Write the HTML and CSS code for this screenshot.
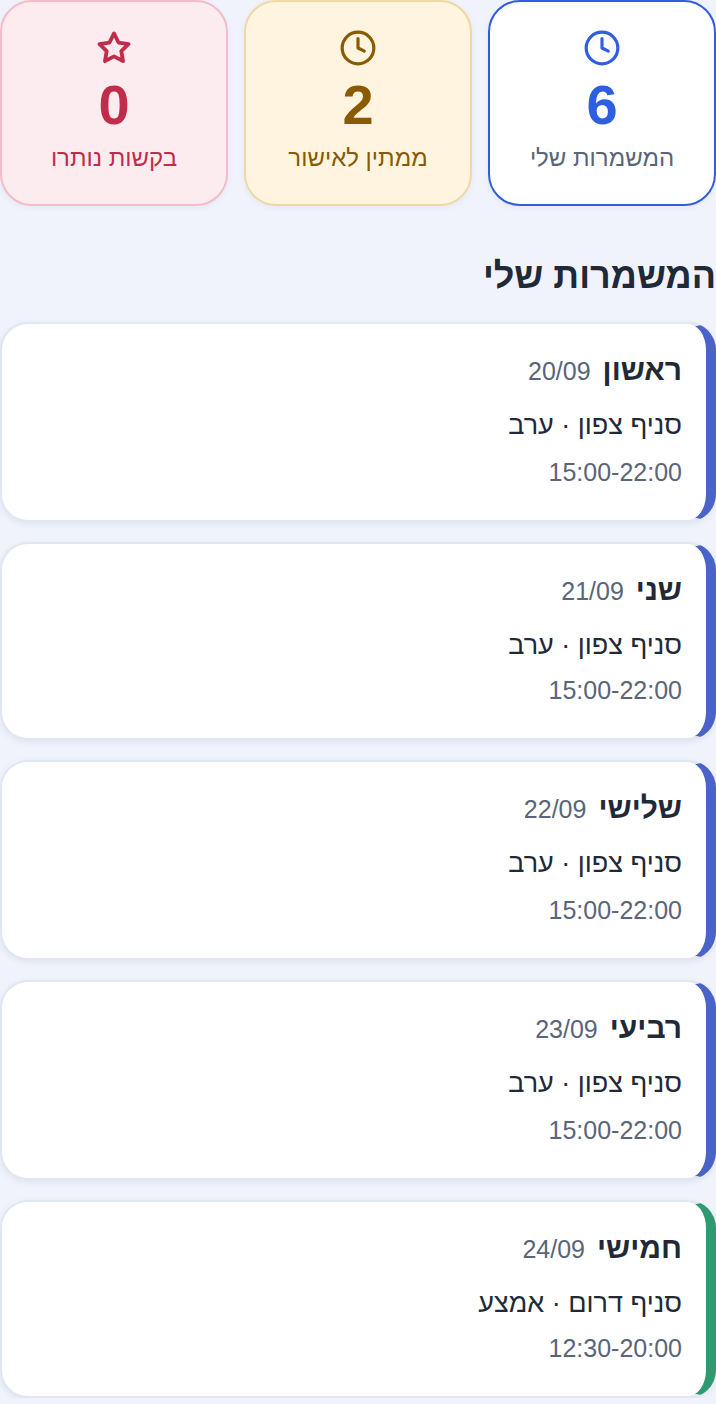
FILE: index.html
```html
<!DOCTYPE html>
<html lang="he" dir="rtl">
  <head>
    <meta charset="UTF-8" />
    <meta name="viewport" content="width=device-width, initial-scale=1.0" />
    <title>המשמרות שלי</title>
    <link rel="stylesheet" href="styles.css">
  </head>
  <body>
    <main>
      <section class="stats">
        <div class="stat stat-mine">
          <svg class="stat-icon" viewBox="0 0 24 24" aria-hidden="true">
            <circle cx="12" cy="12" r="10" />
            <path d="M12 6v6l4 2" />
          </svg>
          <div class="stat-num">6</div>
          <div class="stat-label">המשמרות שלי</div>
        </div>
        <div class="stat stat-pending">
          <svg class="stat-icon" viewBox="0 0 24 24" aria-hidden="true">
            <circle cx="12" cy="12" r="10" />
            <path d="M12 6v6l4 2" />
          </svg>
          <div class="stat-num">2</div>
          <div class="stat-label">ממתין לאישור</div>
        </div>
        <div class="stat stat-given">
          <svg class="stat-icon star-icon" viewBox="-1 -1 26 26" aria-hidden="true">
            <path d="M12 2l3.09 6.26L22 9.27l-5 4.87 1.18 6.88L12 17.77l-6.18 3.25L7 14.14 2 9.27l6.91-1.01L12 2z" />
          </svg>
          <div class="stat-num">0</div>
          <div class="stat-label">בקשות נותרו</div>
        </div>
      </section>

      <h2 class="section-title">המשמרות שלי</h2>

      <section class="shifts">
        <article class="shift">
          <div class="shift-head"><span class="shift-day">ראשון</span><span class="shift-date">20/09</span></div>
          <div class="shift-place">סניף צפון · ערב</div>
          <div class="shift-time">15:00-22:00</div>
        </article>
        <article class="shift shift-short">
          <div class="shift-head"><span class="shift-day">שני</span><span class="shift-date">21/09</span></div>
          <div class="shift-place">סניף צפון · ערב</div>
          <div class="shift-time">15:00-22:00</div>
        </article>
        <article class="shift">
          <div class="shift-head"><span class="shift-day">שלישי</span><span class="shift-date">22/09</span></div>
          <div class="shift-place">סניף צפון · ערב</div>
          <div class="shift-time">15:00-22:00</div>
        </article>
        <article class="shift">
          <div class="shift-head"><span class="shift-day">רביעי</span><span class="shift-date">23/09</span></div>
          <div class="shift-place">סניף צפון · ערב</div>
          <div class="shift-time">15:00-22:00</div>
        </article>
        <article class="shift shift-short shift-south">
          <div class="shift-head"><span class="shift-day">חמישי</span><span class="shift-date">24/09</span></div>
          <div class="shift-place">סניף דרום · אמצע</div>
          <div class="shift-time">12:30-20:00</div>
        </article>
      </section>
    </main>
  </body>
</html>
```

FILE: styles.css
```css
* {
  box-sizing: border-box;
  font-family: "Liberation Sans", Arial, sans-serif;
}

html,
body {
  margin: 0;
  padding: 0;
  background: #f0f3fb;
}

body {
  color: #1f2937;
  overflow: hidden;
}

.stats {
  display: grid;
  grid-template-columns: repeat(3, 1fr);
  gap: 16px;
}

.stat {
  height: 206px;
  padding-top: 27px;
  border: 2px solid;
  border-radius: 32px;
  text-align: center;
  box-shadow: 0 2px 6px rgba(30, 40, 80, 0.05);
}

.stat-icon {
  display: block;
  width: 38px;
  height: 38px;
  margin: 0 auto;
  fill: none;
  stroke: currentColor;
  stroke-width: 2;
  stroke-linecap: round;
  stroke-linejoin: round;
}

.star-icon {
  stroke-width: 2.6;
}

.stat-num {
  margin-top: 4px;
  font-size: 56px;
  font-weight: 700;
  line-height: 68px;
}

.stat-label {
  margin-top: 3px;
  font-size: 24px;
  line-height: 32px;
}

.stat-mine {
  background: #fff;
  border-color: #2f5fe0;
  color: #2f5fe0;
}

.stat-mine .stat-label {
  color: #5a6579;
}

.stat-pending {
  background: #fff4e0;
  border-color: #f0d8a4;
  color: #8a5a00;
}

.stat-given {
  background: #fdecef;
  border-color: #f4bcc8;
  color: #c02c4a;
}

.section-title {
  margin: 48px 0 24px;
  font-size: 36px;
  line-height: 44px;
  font-weight: 700;
}

.shifts {
  display: flex;
  flex-direction: column;
  gap: 20px;
}

.shift {
  padding: 26px 24px 32px;
  background: #fff;
  border: 2px solid #e2e6f0;
  border-right: 10px solid #4a63c8;
  border-radius: 28px;
  box-shadow: 0 2px 6px rgba(30, 40, 80, 0.08);
}

.shift-south {
  border-right-color: #2f9a72;
}

.shift-head {
  display: flex;
  align-items: baseline;
  gap: 12px;
  margin-bottom: 17px;
}

.shift-day {
  font-size: 30px;
  line-height: 40px;
  font-weight: 700;
}

.shift-date {
  font-size: 25px;
  color: #5a6579;
}

.shift-place {
  font-size: 27px;
  line-height: 36px;
  margin-bottom: 13px;
}

.shift-short .shift-place {
  margin-bottom: 11px;
}

.shift-time {
  font-size: 25px;
  line-height: 32px;
  color: #5a6579;
}
```
